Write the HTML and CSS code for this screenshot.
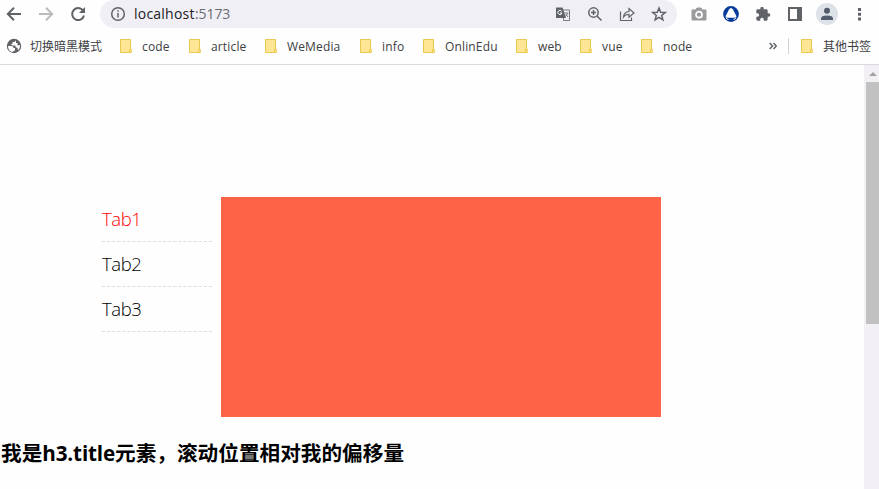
FILE: index.html
```html
<!DOCTYPE html>
<html lang="zh-CN">
<head>
<meta charset="utf-8">
<title>localhost:5173</title>
<link rel="stylesheet" href="styles.css">
</head>
<body>
<svg width="0" height="0" class="defs">
  <symbol id="folder" viewBox="0 0 12 14"><path d="M.5.5h10v9.800h.8v3.200H.5z" fill="#ffe694" stroke="#e9c84c"/><path d="M9.500 13v-2.200q0-.8 1-.8" fill="none" stroke="#e9c84c"/></symbol>
</svg>
<header class="toolbar">
  <svg class="nav" viewBox="0 0 16 16"><path d="M15 8H2M8 1.700 1.800 8 8 14.300" /></svg>
  <svg class="nav muted" viewBox="0 0 16 16"><path d="M1 8h13M8 1.700 14.200 8 8 14.300" /></svg>
  <svg class="nav" viewBox="0 0 16 16"><path d="M13.200 4.800A6 6 0 1 0 14 9.500"/><path d="M15 1v6H9z" class="solid"/></svg>
  <div class="address">
    <svg class="info" viewBox="0 0 16 16"><circle cx="8" cy="8" r="6.300"/><path d="M8 7v4.500M8 4.300v1.500"/></svg>
    <span class="host">localhost</span><span class="port">:5173</span>
    <div class="actions">
      <svg viewBox="0 0 16 16"><path d="M6.500 4h8v10.500h-6" fill="#f1eff6" stroke="#777b80"/><path d="M1 1.500h6.500L11 12H1z" fill="#5f6368"/><path d="M6.700 5.300A2.100 2.100 0 1 0 7 7H5" fill="none" stroke="#fff"/><path d="M9 7h4.500M12.800 7.200 10.500 10.500M10.700 8l2.300 3M8.500 12v2.500" fill="none" stroke="#777b80"/></svg>
      <svg viewBox="0 0 16 16" class="line"><circle cx="6.500" cy="6.500" r="4.700"/><path d="m10 10 4.500 4.500M6.500 4v5M4 6.500h5"/></svg>
      <svg viewBox="0 0 16 16" class="line thin"><path d="M1.500 5.500v9h11v-3M4.500 11q.5-5 5.500-5.500V2.500L15 7l-5 4.200V8.400Q6.500 8.200 4.500 11z"/></svg>
      <svg viewBox="0 0 16 16" class="line"><path d="m8 2 1.700 4.200 4.500.3-3.500 2.900 1.200 4.400L8 11.400l-3.900 2.400 1.200-4.400-3.500-2.900 4.500-.3z"/></svg>
    </div>
  </div>
  <div class="extensions">
    <svg viewBox="0 0 16 16"><path d="M1 4h3.500L6 2h4l1.500 2H15v10H1z" fill="#9a9b9d" stroke="#9a9b9d" stroke-linejoin="round"/><circle cx="8" cy="8.700" r="3" fill="#9a9b9d" stroke="#fff" stroke-width="1.700"/></svg>
    <svg viewBox="0 0 16 16"><circle cx="8" cy="8" r="7.900" fill="#063b9b"/><path d="M6 3.500q2-3 4 0l3.200 6.200q.8 1.700-1.200 2H4q-2-.3-1.200-2z" fill="#fff"/><path d="M3 11.700q1 1.800 2.500 1.800M13 11.700q-1 1.800-2.500 1.800" fill="none" stroke="#fff"/></svg>
    <svg viewBox="0 0 24 24"><path fill="#5f6368" d="M20.500 11H19V7a2 2 0 0 0-2-2h-4V3.500a2.500 2.500 0 0 0-5 0V5H4a2 2 0 0 0-2 2v3.800h1.500a2.700 2.700 0 0 1 0 5.400H2V20a2 2 0 0 0 2 2h3.800v-1.500a2.700 2.700 0 0 1 5.400 0V22H17a2 2 0 0 0 2-2v-4h1.500a2.500 2.500 0 0 0 0-5z"/></svg>
    <svg viewBox="0 0 16 16"><path fill="#5f6368" fill-rule="evenodd" d="M1 1h14v14H1zm2 2v10h7V3z"/></svg>
    <svg class="avatar" viewBox="0 0 22 22"><circle cx="11" cy="11" r="11" fill="#dde1e8"/><circle cx="11" cy="7.700" r="3" fill="#535c6c"/><path d="M5 17v-1.500q0-3 6-3t6 3V17z" fill="#535c6c"/></svg>
    <svg viewBox="0 0 16 16"><path fill="#5f6368" d="M7 2h3v3H7zM7 6.700h3v3H7zM7 11.400h3v3H7z"/></svg>
  </div>
</header>
<nav class="bookmarks">
  <a class="bm w-mode"><svg class="globe" viewBox="0 0 16 16"><circle cx="8" cy="8" r="7.200" fill="#5f6368"/><path d="M2 8h3.500q2 0 2 2h1.500v2.500q-2 0-2 1.500Q2 13.500 2 8M10 2.300 8.500 4H6.500v2H4.500l2 1.500h3V9l2 1 .5 2.500Q14.500 10 14 7l-2.500.5V5H10z" fill="#fff"/></svg><span class="zh">切换暗黑模式</span></a>
  <a class="bm w-code"><svg class="folder"><use href="#folder"/></svg><span>code</span></a>
  <a class="bm w-article"><svg class="folder"><use href="#folder"/></svg><span>article</span></a>
  <a class="bm w-media"><svg class="folder"><use href="#folder"/></svg><span>WeMedia</span></a>
  <a class="bm w-info"><svg class="folder"><use href="#folder"/></svg><span>info</span></a>
  <a class="bm w-edu"><svg class="folder"><use href="#folder"/></svg><span>OnlinEdu</span></a>
  <a class="bm w-web"><svg class="folder"><use href="#folder"/></svg><span>web</span></a>
  <a class="bm w-vue"><svg class="folder"><use href="#folder"/></svg><span>vue</span></a>
  <a class="bm"><svg class="folder"><use href="#folder"/></svg><span>node</span></a>
  <div class="overflow">
    <svg class="more" viewBox="0 0 8 8"><path d="m.7 1 2.800 3L.7 7M4.500 1l2.800 3-2.800 3"/></svg>
    <a class="bm other"><svg class="folder"><use href="#folder"/></svg><span class="zh">其他书签</span></a>
  </div>
</nav>
<div class="viewport">
  <main>
    <section class="demo">
      <ul class="tabs"><li class="active">Tab1</li><li>Tab2</li><li>Tab3</li></ul>
      <div class="panel"></div>
    </section>
    <h3>我是<span class="latin">h3.title</span>元素，滚动位置相对我的偏移量</h3>
  </main>
  <div class="scrollbar"><i class="up"></i><i class="thumb"></i></div>
</div>
</body>
</html>
```
FILE: styles.css
```css
* { box-sizing: border-box; }
body { margin: 0; width: 879px; height: 489px; overflow: hidden; background: #fefefe; font-family: "Open Sans", "Noto Sans CJK SC", sans-serif; }
svg { display: block; flex: none; }
.defs { position: absolute; }
.toolbar { display: flex; align-items: center; height: 28px; padding-left: 6px; }
.nav { width: 16px; height: 16px; margin-right: 16px; fill: none; stroke: #5f6368; stroke-width: 2; }
.nav.muted { stroke: #b9bbbd; }
.nav .solid { fill: #5f6368; stroke: none; }
.nav:nth-child(3) { margin-right: 14px; }
.address { display: flex; align-items: center; width: 577px; height: 28px; padding: 0 10px; border-radius: 14px; background: #f1eff6; font-size: 14px; }
.info { width: 16px; height: 16px; margin-right: 8px; fill: none; stroke: #5f6368; stroke-width: 1.5; }
.host { width: 61px; color: #202124; letter-spacing: .22px; }
.port { color: #696c70; letter-spacing: -.1px; }
.host, .port { position: relative; top: -1px; }
.actions { display: flex; gap: 16px; margin-left: auto; }
.actions svg { width: 16px; height: 16px; }
.line { fill: none; stroke: #5f6368; stroke-width: 1.5; }
.thin { stroke-width: 1.2; }
.extensions { display: flex; align-items: center; gap: 16px; margin-left: 14px; }
.extensions svg { width: 16px; height: 16px; }
.extensions .avatar { width: 22px; height: 22px; margin: 0 -3px; }
.bookmarks { display: flex; align-items: center; height: 37px; padding: 0 8px 0 6px; border-bottom: 1px solid #d9dadb; font-size: 12px; letter-spacing: .15px; color: #3c4043; }
.bm { display: flex; align-items: center; flex: none; white-space: nowrap; }
.zh { letter-spacing: 0; }
.globe { width: 16px; height: 16px; margin-right: 8px; }
.folder { width: 12px; height: 14px; margin-right: 10px; }
.w-mode { width: 114px; }
.w-code { width: 69px; }
.w-article { width: 76px; }
.w-media { width: 95px; }
.w-info { width: 63px; }
.w-edu { width: 93px; }
.w-web { width: 64px; }
.w-vue { width: 61px; }
.overflow { display: flex; align-items: center; margin-left: auto; }
.more { width: 8px; height: 8px; margin-right: 11px; fill: none; stroke: #5f6368; stroke-width: 1.5; }
.other { height: 16px; padding-left: 12px; border-left: 1px solid #cfd1d3; }
.viewport { display: flex; height: 424px; }
main { width: 864px; padding-top: 132px; }
.demo { display: flex; align-items: flex-start; gap: 9px; padding-left: 102px; }
.tabs { width: 110px; margin: 0; padding: 0; list-style: none; font-size: 18.5px; font-weight: 300; letter-spacing: -.4px; color: #000; }
.tabs li { height: 45px; line-height: 44px; border-bottom: 1px dashed #ddd; }
.tabs .active { color: #f00; }
.panel { width: 440px; height: 220px; background: #ff6347; }
h3 { margin: 20px 0 0 1px; font-size: 20.65px; line-height: 32px; white-space: nowrap; color: #000; }
.latin { font-weight: 700; letter-spacing: -.15px; }
.scrollbar { width: 15px; padding-left: 2px; background: #f2f0f4; }
.up { display: block; width: 0; height: 0; margin: 7px 0 6px 3px; border: solid transparent; border-width: 0 4px 4px; border-bottom-color: #a3a3a3; }
.thumb { display: block; height: 242px; background: #c1c1c1; }
```
